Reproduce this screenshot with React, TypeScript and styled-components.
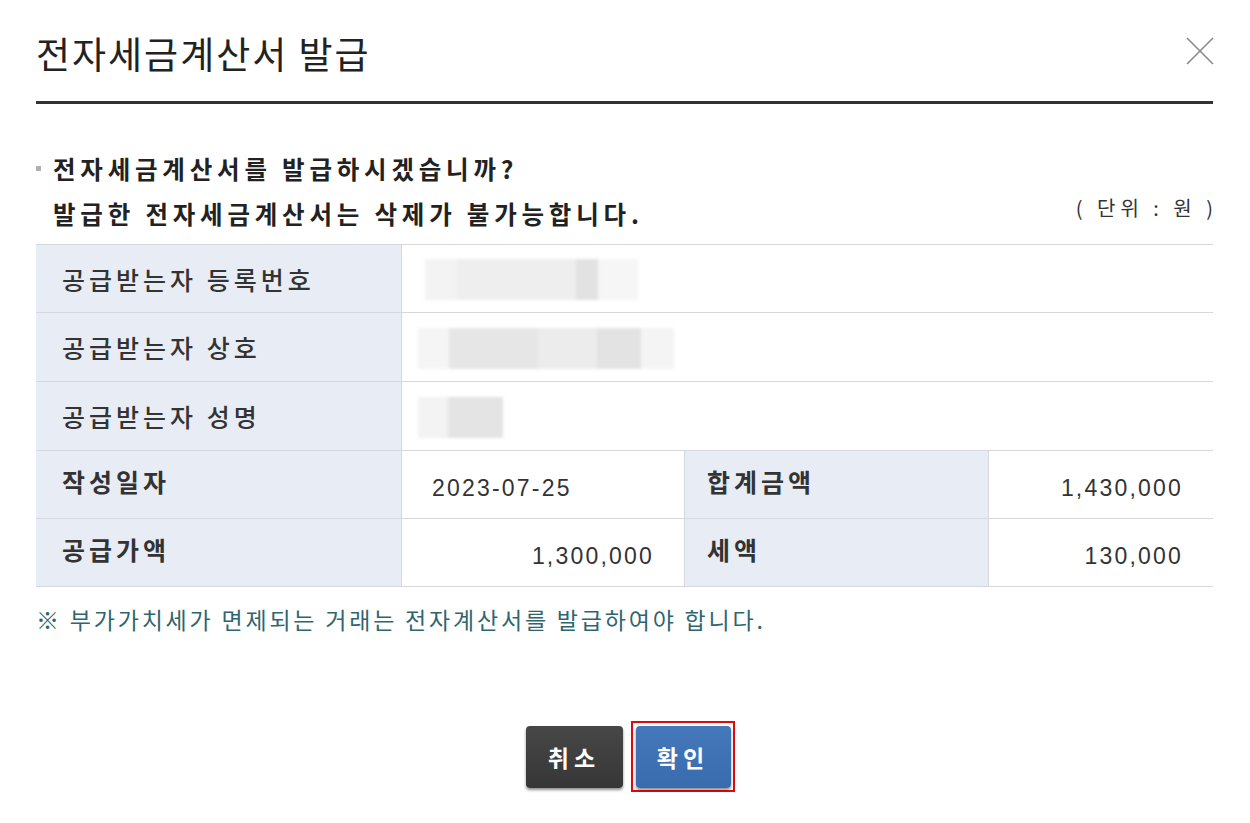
import styled, { createGlobalStyle } from "styled-components";

const GlobalStyle = createGlobalStyle`
  html, body {
    margin: 0;
    padding: 0;
    background: #ffffff;
  }
  body {
    font-family: "Noto Sans CJK KR", "Noto Sans", sans-serif;
    color: #333;
  }
`;

// 모달 전체
const Dialog = styled.div`
  width: 1250px;
  height: 823px;
  box-sizing: border-box;
  padding: 0 37px 0 36px;
  display: flex;
  flex-direction: column;
`;

// 제목 영역
const Header = styled.div`
  height: 104px;
  box-sizing: border-box;
  padding-top: 5px;
  display: flex;
  align-items: center;
  justify-content: space-between;
  border-bottom: 3px solid #333;
`;

const Title = styled.h1`
  margin: 0;
  font-size: 37px;
  font-weight: 400;
  color: #222;
  letter-spacing: 2px;
`;

const CloseButton = styled.button`
  width: 30px;
  height: 30px;
  padding: 0;
  border: 0;
  margin: 0 -2px 4px 0;
  background: none;
  cursor: pointer;
`;

// 안내 문구
const Notice = styled.div`
  margin-top: 42px;
  display: flex;
  align-items: flex-end;
  justify-content: space-between;
`;

const NoticeText = styled.div`
  display: flex;
  flex-direction: column;
`;

const NoticeLine = styled.p<{ $bullet?: boolean }>`
  position: relative;
  margin: 0;
  padding-left: 17px;
  font-size: 24.5px;
  line-height: 45px;
  font-weight: 700;
  color: #222;
  letter-spacing: 4.8px;

  &::before {
    content: "";
    display: ${(p) => (p.$bullet ? "block" : "none")};
    position: absolute;
    left: 0;
    top: 20px;
    width: 5px;
    height: 5px;
    background: #b0b0b0;
  }
`;

const Unit = styled.span`
  font-size: 20px;
  line-height: 45px;
  color: #333;
  letter-spacing: 5px;
  margin-right: -5px;
  margin-bottom: 6px;
`;

// 정보 표
const InfoGrid = styled.div`
  margin-top: 8px;
  display: grid;
  grid-template-columns: 365px 283px 304px 225px;
  grid-template-rows: 68px 69px 69px 68px 68px;
  border-top: 1px solid #d5d9df;
`;

const Label = styled.div<{ $bold?: boolean; $edge?: boolean }>`
  display: flex;
  align-items: center;
  padding-left: ${(p) => (p.$edge ? "26px" : "22px")};
  padding-bottom: ${(p) => (p.$bold ? "8px" : "0")};
  background: #e8ecf4;
  border-bottom: 1px solid #d5d9df;
  border-left: ${(p) => (p.$edge ? "0" : "1px solid #d5d9df")};
  font-size: 25px;
  font-weight: ${(p) => (p.$bold ? 700 : 500)};
  color: #333;
  letter-spacing: 4px;
`;

const Value = styled.div<{ $span?: number; $align?: "left" | "right" }>`
  grid-column: span ${(p) => p.$span ?? 1};
  display: flex;
  align-items: center;
  justify-content: ${(p) => (p.$align === "right" ? "flex-end" : "flex-start")};
  padding: 8px 30px 0 30px;
  border-bottom: 1px solid #d5d9df;
  border-left: 1px solid #d5d9df;
  font-family: "Liberation Sans", Arial, sans-serif;
  font-size: 23px;
  color: #333;
  letter-spacing: 2.2px;
`;

// 가려진 개인정보
const Redacted = styled.span<{ $width: number; $shades: string }>`
  display: block;
  width: ${(p) => p.$width}px;
  height: 41px;
  margin-top: -6px;
  background: ${(p) => p.$shades};
  filter: blur(1.5px);
`;

const Footnote = styled.p`
  margin: 17px 0 0;
  font-size: 23px;
  line-height: 30px;
  color: #2f6570;
  letter-spacing: 2.8px;
`;

// 버튼
const Actions = styled.div`
  margin-top: 87px;
  padding-left: 12px;
  display: flex;
  justify-content: center;
  align-items: center;
  gap: 8px;
`;

const ActionButton = styled.button<{ $primary?: boolean }>`
  width: ${(p) => (p.$primary ? "95px" : "97px")};
  height: 62px;
  border: 0;
  border-radius: 4px;
  background: ${(p) =>
    p.$primary
      ? "linear-gradient(#4577bb, #396baf)"
      : "linear-gradient(#474747, #363636)"};
  box-shadow: 0 2px 3px rgba(0, 0, 0, 0.45);
  color: #fff;
  font-family: "Noto Sans CJK KR", sans-serif;
  font-size: 23px;
  font-weight: 700;
  letter-spacing: 5px;
  padding-left: 5px;
  cursor: pointer;
`;

// 선택 표시 테두리
const FocusRing = styled.span`
  display: inline-flex;
  padding: 3px 2px 2px 3px;
  border: 2px solid #e5080b;
`;

function CloseIcon() {
  return (
    <svg width="30" height="30" viewBox="0 0 30 30">
      <path d="M2 2 L28 28 M28 2 L2 28" stroke="#8a8a8a" strokeWidth="1.6" fill="none" />
    </svg>
  );
}

const shade = (stops: [string, number][]) => {
  let acc = 0;
  const parts = stops.map(([c, w]) => {
    const from = acc;
    acc += w;
    return `${c} ${from}% ${acc}%`;
  });
  return `linear-gradient(to right, ${parts.join(", ")})`;
};

export default function App() {
  return (
    <>
      <GlobalStyle />
      <Dialog>
        <Header>
          <Title>전자세금계산서 발급</Title>
          <CloseButton aria-label="닫기">
            <CloseIcon />
          </CloseButton>
        </Header>

        <Notice>
          <NoticeText>
            <NoticeLine $bullet>전자세금계산서를 발급하시겠습니까?</NoticeLine>
            <NoticeLine>발급한 전자세금계산서는 삭제가 불가능합니다.</NoticeLine>
          </NoticeText>
          <Unit>( 단위 : 원 )</Unit>
        </Notice>

        <InfoGrid>
          <Label $edge>공급받는자 등록번호</Label>
          <Value $span={3} style={{ paddingLeft: 23 }}>
            <Redacted
              $width={213}
              $shades={shade([
                ["#f3f3f3", 15],
                ["#eeeeee", 56],
                ["#e2e2e2", 10],
                ["#f6f6f6", 19],
              ])}
            />
          </Value>

          <Label $edge>공급받는자 상호</Label>
          <Value $span={3} style={{ paddingLeft: 16 }}>
            <Redacted
              $width={256}
              $shades={shade([
                ["#f5f5f5", 12],
                ["#e6e6e6", 35],
                ["#ececec", 23],
                ["#e3e3e3", 17],
                ["#f4f4f4", 13],
              ])}
            />
          </Value>

          <Label $edge>공급받는자 성명</Label>
          <Value $span={3} style={{ paddingLeft: 16 }}>
            <Redacted
              $width={85}
              $shades={shade([
                ["#f3f3f3", 35],
                ["#e4e4e4", 65],
              ])}
            />
          </Value>

          <Label $edge $bold>작성일자</Label>
          <Value>2023-07-25</Value>
          <Label $bold>합계금액</Label>
          <Value $align="right">1,430,000</Value>

          <Label $edge $bold>공급가액</Label>
          <Value $align="right">1,300,000</Value>
          <Label $bold>세액</Label>
          <Value $align="right">130,000</Value>
        </InfoGrid>

        <Footnote>※ 부가가치세가 면제되는 거래는 전자계산서를 발급하여야 합니다.</Footnote>

        <Actions>
          <ActionButton>취소</ActionButton>
          <FocusRing>
            <ActionButton $primary>확인</ActionButton>
          </FocusRing>
        </Actions>
      </Dialog>
    </>
  );
}
